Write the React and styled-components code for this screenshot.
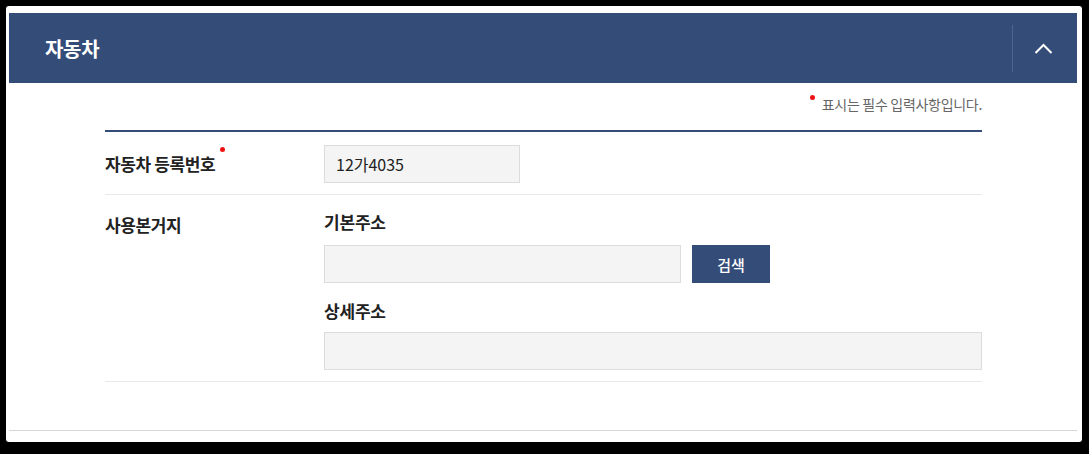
import React from 'react'
import styled, { createGlobalStyle } from 'styled-components'

const GlobalStyle = createGlobalStyle`
  html, body {
    margin: 0;
    padding: 0;
    background: #000;
  }
  body {
    font-family: "Noto Sans CJK KR", "Noto Sans", sans-serif;
    color: #222;
  }
`

const Paper = styled.div`
  box-sizing: border-box;
  margin: 6px 0 0 6px;
  width: 1076px;
  height: 436px;
  background: #fff;
  border-radius: 3px;
  padding: 7px 5px 0 3px;
`

const Panel = styled.section`
  border-bottom: 1px solid #d6d6d6;
`

const Header = styled.div`
  display: flex;
  align-items: center;
  justify-content: space-between;
  height: 70px;
  padding-left: 36px;
  background: #344c78;
`

const Title = styled.h2`
  margin: 0;
  font-size: 20px;
  font-weight: 700;
  letter-spacing: -0.3px;
  color: #fff;
`

const Toggle = styled.button`
  display: flex;
  align-items: center;
  justify-content: center;
  width: 65px;
  height: 47px;
  padding: 0 3px 0 0;
  border: 0;
  border-left: 1px solid rgba(255, 255, 255, 0.14);
  background: transparent;
  cursor: pointer;
`

const Body = styled.div`
  padding: 11px 95px 48px 96px;
`

const Note = styled.p`
  margin: 0 0 16px;
  text-align: right;
  font-size: 14px;
  line-height: 20px;
  letter-spacing: -0.3px;
  color: #666;
`

const Dot = styled.span`
  display: inline-block;
  width: 5px;
  height: 5px;
  border-radius: 50%;
  background: #ee1111;
  vertical-align: top;
  margin: ${p => (p.$label ? '-7px 0 0 5px' : '1px 7px 0 0')};
`

const Table = styled.div`
  border-top: 2px solid #344c78;
`

const Row = styled.div`
  display: grid;
  grid-template-columns: 219px 1fr;
  align-items: ${p => (p.$top ? 'start' : 'center')};
  padding: ${p => (p.$top ? '17px 0 11px' : '13px 0 11px')};
  border-bottom: 1px solid #e9e9e9;
`

const Label = styled.div`
  font-size: 17px;
  font-weight: 700;
  line-height: 20px;
  letter-spacing: -0.4px;
  color: #222;
  padding-top: ${p => (p.$top ? '3px' : '0')};
`

const Field = styled.div`
  display: flex;
  flex-direction: column;
`

const SubLabel = styled.div`
  font-size: 17px;
  font-weight: 700;
  line-height: 20px;
  letter-spacing: -0.2px;
  color: #222;
  margin: ${p => (p.$first ? '0 0 13px' : '18px 0 11px')};
`

const Line = styled.div`
  display: flex;
  gap: 11px;
`

const Input = styled.input`
  box-sizing: border-box;
  width: ${p => p.$w};
  height: 38px;
  padding: 0 11px;
  border: 1px solid #dcdcdc;
  background: #f4f4f4;
  font-family: "Noto Sans CJK KR", "Noto Sans", sans-serif;
  font-size: 16px;
  color: #222;
  outline: none;
`

const Button = styled.button`
  width: 78px;
  height: 38px;
  border: 0;
  background: #344c78;
  color: #fff;
  font-family: "Noto Sans CJK KR", "Noto Sans", sans-serif;
  font-size: 15px;
  font-weight: 500;
  cursor: pointer;
`

export default function App() {
  return (
    <>
      <GlobalStyle />
      <Paper>
        <Panel>
          <Header>
            <Title>자동차</Title>
            <Toggle aria-label="접기">
              <svg width="19" height="11" viewBox="0 0 19 11" fill="none">
                <path d="M1.5 10 L9.5 2 L17.5 10" stroke="#fff" strokeWidth="2" />
              </svg>
            </Toggle>
          </Header>
          <Body>
            <Note>
              <Dot />표시는 필수 입력사항입니다.
            </Note>
            <Table>
              <Row>
                <Label>
                  자동차 등록번호<Dot $label />
                </Label>
                <div>
                  <Input $w="196px" defaultValue="12가4035" readOnly />
                </div>
              </Row>
              <Row $top>
                <Label $top>사용본거지</Label>
                <Field>
                  <SubLabel $first>기본주소</SubLabel>
                  <Line>
                    <Input $w="357px" readOnly />
                    <Button>검색</Button>
                  </Line>
                  <SubLabel>상세주소</SubLabel>
                  <Input $w="100%" />
                </Field>
              </Row>
            </Table>
          </Body>
        </Panel>
      </Paper>
    </>
  )
}
